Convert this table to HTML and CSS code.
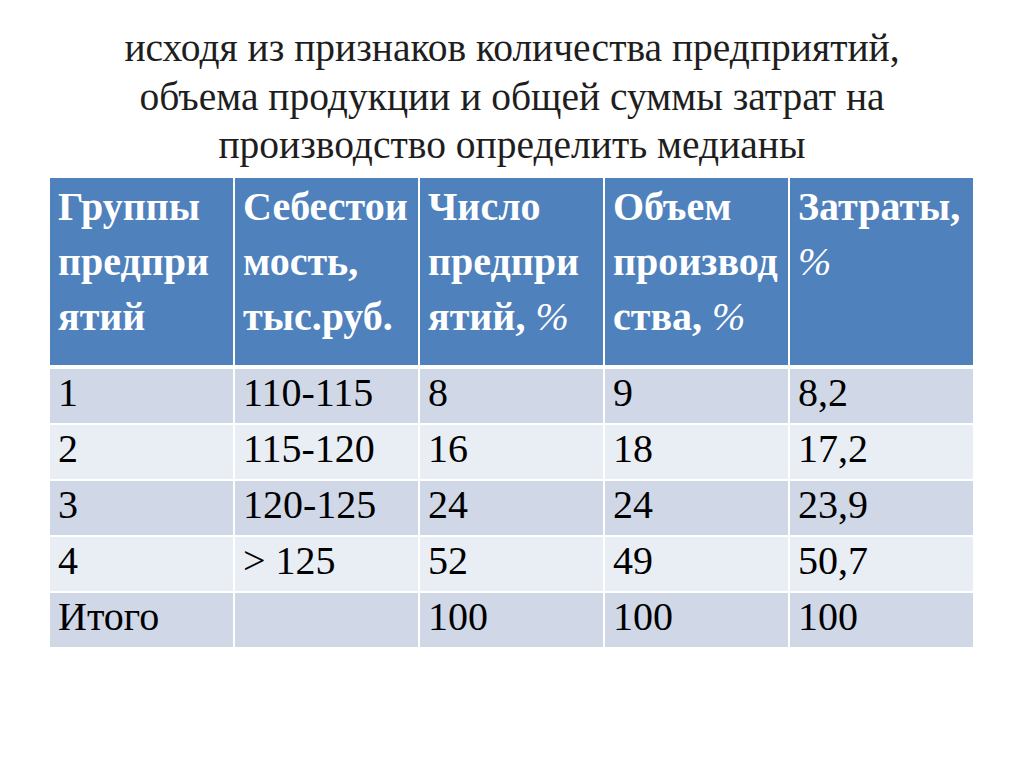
FILE: index.html
```html
<!DOCTYPE html>
<html>
<head>
<meta charset="utf-8">
<title>Медианы</title>
<link rel="stylesheet" href="styles.css">
</head>
<body>
<div class="slide">
  <h1 class="title">исходя из признаков количества предприятий,<br>объема продукции и общей суммы затрат на<br>производство определить медианы</h1>
  <table class="data">
    <colgroup>
      <col class="c"><col class="c"><col class="c"><col class="c"><col class="c last">
    </colgroup>
    <thead>
      <tr>
        <th>Группы<br>предпри<br>ятий</th>
        <th>Себестои<br>мость,<br>тыс.руб.</th>
        <th>Число<br>предпри<br>ятий, <span class="pct">%</span></th>
        <th>Объем<br>производ<br>ства, <span class="pct">%</span></th>
        <th>Затраты,<br><span class="pct">%</span></th>
      </tr>
    </thead>
    <tbody>
      <tr class="odd"><td>1</td><td>110-115</td><td>8</td><td>9</td><td>8,2</td></tr>
      <tr class="even"><td>2</td><td>115-120</td><td>16</td><td>18</td><td>17,2</td></tr>
      <tr class="odd"><td>3</td><td>120-125</td><td>24</td><td>24</td><td>23,9</td></tr>
      <tr class="even"><td>4</td><td>&gt; 125</td><td>52</td><td>49</td><td>50,7</td></tr>
      <tr class="odd"><td>Итого</td><td></td><td>100</td><td>100</td><td>100</td></tr>
    </tbody>
  </table>
</div>
</body>
</html>
```

FILE: styles.css
```css
html, body {
  margin: 0;
  padding: 0;
  background: #ffffff;
}

.slide {
  width: 1024px;
  height: 767px;
  padding-top: 24px;
  box-sizing: border-box;
}

.title {
  margin: 0 0 8.5px 0;
  font-family: "Liberation Serif", serif;
  font-weight: normal;
  font-size: 39.5px;
  line-height: 48.5px;
  text-align: center;
  color: #1e1e1e;
  white-space: nowrap;
}

.data {
  margin-left: 50px;
  border-collapse: separate;
  border-spacing: 0;
  table-layout: fixed;
  width: 923px;
}

.data col.c { width: 185px; }
.data col.last { width: 183px; }

.data th,
.data td {
  font-family: "Liberation Serif", serif;
  border-right: 2px solid #ffffff;
  border-bottom: 2px solid #ffffff;
  padding: 0 0 0 8px;
  text-align: left;
  vertical-align: top;
  white-space: nowrap;
  overflow: hidden;
}

.data th:last-child,
.data td:last-child {
  border-right: none;
}

.data th {
  background: #4f81bd;
  color: #ffffff;
  font-weight: bold;
  font-size: 40px;
  line-height: 55px;
  padding-top: 1px;
  height: 186px;
  border-bottom-width: 4px;
}

.pct {
  font-style: italic;
  font-weight: normal;
}

.data td {
  font-size: 40px;
  line-height: 48px;
  padding-bottom: 6px;
  height: 48px;
  color: #000000;
}

.data tr.odd td { background: #d0d8e8; }
.data tr.even td { background: #e9edf4; }

.data tbody tr:last-child td { border-bottom: none; }
```
